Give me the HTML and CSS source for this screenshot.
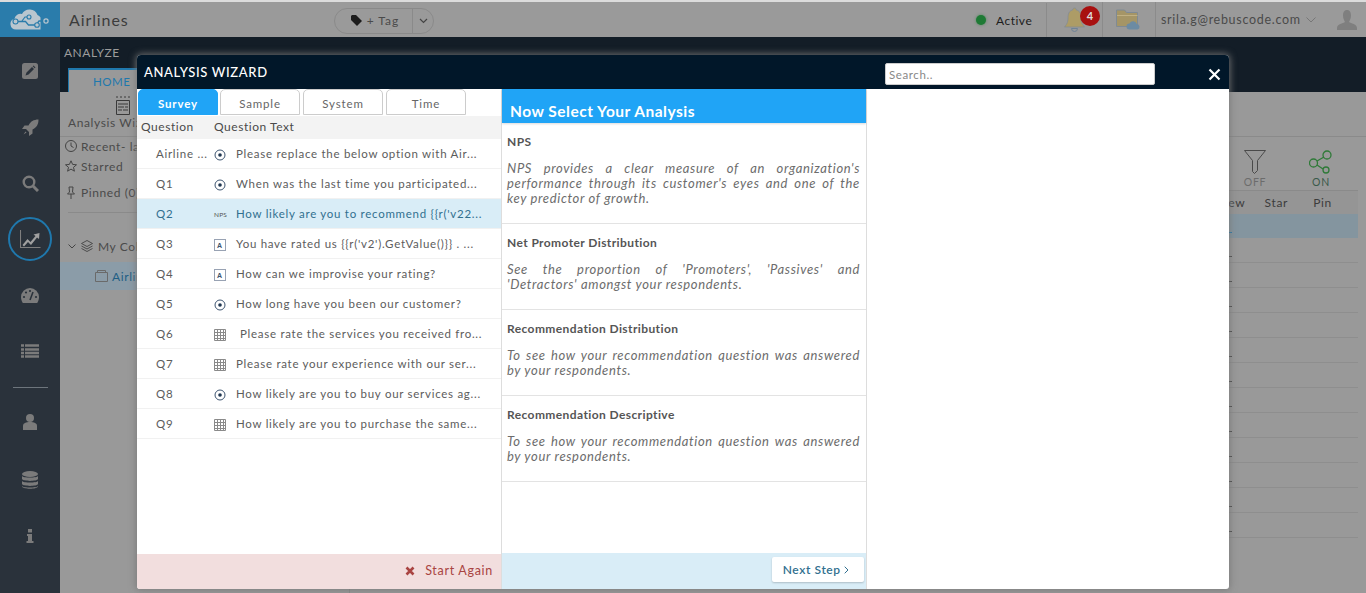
FILE: index.html
```html
<!DOCTYPE html>
<html lang="en">
<head>
<meta charset="utf-8">
<title>Airlines - Analysis Wizard</title>
<link rel="stylesheet" href="styles.css">
</head>
<body>
<svg class="defs" width="0" height="0" aria-hidden="true">
  <symbol id="radio" viewBox="0 0 12 12"><circle cx="6" cy="6" r="5" fill="none" stroke="#3d5470" stroke-width="1"/><circle cx="6" cy="6" r="1.8" fill="#1f3650"/></symbol>
  <symbol id="grid" viewBox="0 0 12 12"><path d="M.5.5h11v11H.5zM.5 3.5h11M.5 6.5h11M.5 9.5h11M3.5.5v11M6.5.5v11M9.5.5v11" fill="none" stroke="#8a8a8a" stroke-width="1"/></symbol>
  <symbol id="abox" viewBox="0 0 12 12"><rect x=".5" y=".5" width="11" height="11" fill="none" stroke="#98a2b3"/><text x="6" y="9" font-size="7" font-weight="700" text-anchor="middle" font-family="Liberation Sans" fill="#3d5470">A</text></symbol>
</svg>
<div class="app">
  <div class="strip"></div>
  <header class="topbar">
    <div class="logo">
      <svg width="39" height="21" viewBox="0 0 39 21"><path d="M6 20.500a5.500 5.500 0 0 1-1.500-10.800A6 6 0 0 1 12 5a8.500 8.500 0 0 1 15.500 1 6 6 0 0 1 3 2.500V20.500z" fill="#b9c6cf"/><path d="M6.500 12.500h9l3 3.500h7.500l3-4h7" fill="none" stroke="#2a7cab" stroke-width="1.300"/><path d="M12 12l3-4h3" fill="none" stroke="#2a7cab" stroke-width="1.200"/><circle cx="5.500" cy="12.500" r="2.500" fill="#b9c6cf" stroke="#2a7cab" stroke-width="1.100"/><circle cx="19" cy="8" r="2" fill="#b9c6cf" stroke="#2a7cab" stroke-width="1.100"/><circle cx="27" cy="16" r="2.300" fill="#b9c6cf" stroke="#2a7cab" stroke-width="1.100"/><circle cx="36" cy="12" r="2.100" fill="#2a7cab" stroke="#b9c6cf" stroke-width="1.200"/></svg>
    </div>
    <div class="app-title">Airlines</div>
    <div class="tag-group">
      <div class="tag-main">
        <svg width="11" height="11" viewBox="0 0 11 11"><path d="M0 1v4l6 6 5-5-6-6H1z" fill="#1c1c1c"/></svg>
        <span>+ Tag</span>
      </div>
      <div class="tag-caret"><svg width="9" height="6" viewBox="0 0 9 6"><path d="M1 1l3.500 3.500L8 1" fill="none" stroke="#444" stroke-width="1.200"/></svg></div>
    </div>
    <div class="top-right">
      <div class="status"><span class="dot"></span><span>Active</span></div>
      <div class="cell bell-cell">
        <svg width="21" height="25" viewBox="0 0 21 25"><path d="M10.500 1c1 0 1.800.8 1.800 2 4 1 4.700 4 4.700 8 0 5 2 7 3.500 9H.5c1.500-2 3.500-4 3.500-9 0-4 .7-7 4.700-8 0-1.200.8-2 1.800-2z" fill="#ad9c66" stroke="#7f8a96" stroke-width=".7"/><path d="M7.500 21.500a3 3 0 0 0 6 0z" fill="none" stroke="#6f8296"/></svg>
        <span class="badge">4</span>
      </div>
      <div class="cell folder-cell">
        <svg width="24" height="21" viewBox="0 0 24 21"><path d="M.5 17.500V1h8l2 2.500h11V17.500z" fill="#a59566" stroke="#7f8a94"/><path d="M1 6.500h20.500" stroke="#c0b083"/><path d="M13.500 20.500a3 3 0 0 1 0-6 4 4 0 0 1 7.300.5 2.800 2.800 0 0 1 .7 5.500z" fill="#6c8ba3"/></svg>
      </div>
      <div class="user">
        <span class="email">srila.g@rebuscode.com</span>
        <svg class="user-caret" width="10" height="6" viewBox="0 0 10 6"><path d="M.5.500L5 5 9.500.500" fill="none" stroke="#777"/></svg>
        <svg width="20" height="20" viewBox="0 0 20 20"><path d="M10 0c3 0 4 2.500 4 5.500S12.500 11 12 12c2 1.500 8 2 8 6v2H0v-2c0-4 6-4.500 8-6-.5-1-2-3.500-2-6.500S7 0 10 0z" fill="#7f7f7f"/></svg>
      </div>
    </div>
  </header>

  <div class="body">
    <nav class="side">
      <div class="side-item"><svg width="16" height="16" viewBox="0 0 16 16"><rect width="16" height="16" rx="2.500" fill="#7b7b7b"/><path d="M3.500 12.500l1-3 5.500-5.500 2 2-5.500 5.500zM10.700 3.300l.8-.8 2 2-.8.8z" fill="#2a323b"/></svg></div>
      <div class="side-item"><svg width="17" height="17" viewBox="0 0 17 17"><path d="M16.500.500c-5 0-8 2-10 6H2.500L0 10h4l3 3v4l3.500-2.500V10.500c4-2 6-5 6-10zM3.500 12.500l-2 3 3-2z" fill="#7b7b7b"/></svg></div>
      <div class="side-item"><svg width="17" height="17" viewBox="0 0 17 17"><circle cx="7" cy="7" r="5.300" fill="none" stroke="#7b7b7b" stroke-width="2.400"/><path d="M11 11l5 5" stroke="#7b7b7b" stroke-width="3"/></svg></div>
      <div class="side-item"><div class="ring"><svg width="21" height="18" viewBox="0 0 21 18"><path d="M.5 0v17.500h20" fill="none" stroke="#7f7f7f" stroke-width="1.100"/><path d="M2.500 15l5-6 3 3 5-6-2-1.500 6-1.500-.5 6-2-1.500-6 7.500-3-3-4 4.500z" fill="#a0a0a0"/></svg></div></div>
      <div class="side-item"><svg width="18" height="15" viewBox="0 0 18 15"><path d="M9 0a9 9 0 0 1 9 9c0 2-.6 4-1.800 6H1.800C.6 13 0 11 0 9a9 9 0 0 1 9-9z" fill="#7b7b7b"/><path d="M9 12l3-8" stroke="#2a323b" stroke-width="1.600"/><circle cx="3" cy="9" r="1.100" fill="#2a323b"/><circle cx="5" cy="4.500" r="1.100" fill="#2a323b"/><circle cx="9" cy="3" r="1.100" fill="#2a323b"/><circle cx="15" cy="9" r="1.100" fill="#2a323b"/></svg></div>
      <div class="side-item"><svg width="18" height="14" viewBox="0 0 18 14"><path d="M0 1.500h3M4 1.500h14M0 5.500h3M4 5.500h14M0 9h3M4 9h14M0 12.500h3M4 12.500h14" stroke="#7b7b7b" stroke-width="2.400"/></svg></div>
      <div class="side-rule"></div>
      <div class="side-item"><svg width="14" height="16" viewBox="0 0 14 16"><circle cx="7" cy="4" r="4" fill="#7b7b7b"/><path d="M0 16v-4c0-3 3-4 7-4s7 1 7 4v4z" fill="#7b7b7b"/></svg></div>
      <div class="side-item db-item"><svg width="16" height="18" viewBox="0 0 16 18"><ellipse cx="8" cy="3" rx="8" ry="3" fill="#7b7b7b"/><path d="M0 5c1 2 15 2 16 0v3c-1 2.500-15 2.500-16 0zM0 10c1 2 15 2 16 0v3c-1 2.500-15 2.500-16 0zM0 15c1 2 15 2 16 0v.500c-1 3-15 3-16 0z" fill="#7b7b7b"/></svg></div>
      <div class="side-item"><svg width="8" height="14" viewBox="0 0 8 14"><rect x="2" width="4" height="3.500" fill="#7b7b7b"/><path d="M1 5h5v7h1.500v2H.5v-2H2V7H1z" fill="#7b7b7b"/></svg></div>
    </nav>

    <main class="main">
      <div class="band">
        <div class="band-title">ANALYZE</div>
        <div class="home-tab">HOME</div>
      </div>
      <div class="content">
        <aside class="pane">
          <div class="wizard-btn">
            <svg width="16" height="20" viewBox="0 0 16 20"><path d="M1.500 5.500h13v14h-13z" fill="none" stroke="#3a3a3a"/><path d="M3 9h10M3 12h6M10 12h3M3 15h4M8 15h5" stroke="#3a3a3a" stroke-width="1.200"/><path d="M1 2h14" stroke="#3a3a3a" stroke-dasharray="2 2"/></svg>
            <span>Analysis Wizard</span>
          </div>
          <div class="nav-line"><svg width="12" height="12" viewBox="0 0 12 12"><circle cx="6" cy="6" r="5.500" fill="none" stroke="#444"/><path d="M6 2.500V6l2.500 1.500" fill="none" stroke="#444"/></svg><span>Recent- last 7</span></div>
          <div class="nav-line"><svg width="12" height="12" viewBox="0 0 12 12"><path d="M6 .8l1.600 3.600 3.900.4-3 2.500.9 3.900L6 9.100l-3.400 2.100.9-3.900-3-2.500 3.900-.4z" fill="none" stroke="#444"/></svg><span>Starred</span></div>
          <div class="nav-line pin"><svg width="12" height="13" viewBox="0 0 12 13"><path d="M4 1h4l-.5 5 2 2h-7l2-2zM6 8v5" fill="none" stroke="#444"/></svg><span>Pinned (0)</span></div>
          <div class="pane-rule"></div>
          <div class="tree-line"><svg width="8" height="5" viewBox="0 0 8 5"><path d="M.5.500L4 4 7.500.500" fill="none" stroke="#444"/></svg><svg width="12" height="12" viewBox="0 0 12 12"><path d="M6 .5L11.500 3.500 6 6.500.5 3.500zM.5 6L6 9l5.500-3M.5 8.500L6 11.500l5.500-3" fill="none" stroke="#444" stroke-width=".9"/></svg><span>My Collection</span></div>
          <div class="tree-sel"><svg width="13" height="12" viewBox="0 0 13 12"><path d="M.5 2.500h12v9H.5zM2.500 2.500V.5h8v2" fill="none" stroke="#6a6a6a"/></svg><span>Airlines</span></div>
        </aside>
        <section class="board">
          <div class="board-top"></div>
          <div class="tools">
            <div class="tool"><svg width="22" height="24" viewBox="0 0 22 24"><path d="M.5.500h21l-8 10v10l-3 3-2-2V10.500z" fill="none" stroke="#4a4a4a"/></svg><span>OFF</span></div>
            <div class="tool on"><svg width="24" height="24" viewBox="0 0 24 24"><circle cx="18" cy="5" r="4" fill="none" stroke="#2f7a38" stroke-width="1.300"/><circle cx="4.500" cy="13" r="4" fill="none" stroke="#2f7a38" stroke-width="1.300"/><circle cx="17" cy="20" r="3" fill="none" stroke="#2f7a38" stroke-width="1.300"/><path d="M8 11l7-4M8 15l6 4" stroke="#2f7a38" stroke-width="1.300"/></svg><span>ON</span></div>
          </div>
          <div class="thead"><span class="col-view">View</span><span class="col-star">Star</span><span class="col-pin">Pin</span></div>
          <div class="tsel"></div>
          <div class="trow"></div><div class="trow"></div><div class="trow"></div><div class="trow"></div>
          <div class="trow"></div><div class="trow"></div><div class="trow"></div><div class="trow"></div>
          <div class="trow"></div><div class="trow"></div><div class="trow"></div><div class="trow"></div>
        </section>
      </div>
    </main>
  </div>

  <div class="wizard">
    <div class="wizard-head">
      <h1>ANALYSIS WIZARD</h1>
      <input class="search" type="text" placeholder="Search..">
      <svg class="close" width="13" height="13" viewBox="0 0 13 13"><path d="M1.500 1.500l10 10M11.500 1.500l-10 10" stroke="#fff" stroke-width="2.200"/></svg>
    </div>
    <div class="wizard-body">
      <section class="col-left">
        <div class="tabs">
          <div class="tab active">Survey</div>
          <div class="tab">Sample</div>
          <div class="tab tab-system">System</div>
          <div class="tab">Time</div>
        </div>
        <div class="q-head"><span class="q-c1">Question</span><span>Question Text</span></div>
        <div class="q-list">
          <div class="q-row"><span class="q-id">Airline ...</span><svg class="q-ico"><use href="#radio"/></svg><span class="q-text">Please replace the below option with Air...</span></div>
          <div class="q-row"><span class="q-id">Q1</span><svg class="q-ico"><use href="#radio"/></svg><span class="q-text">When was the last time you participated...</span></div>
          <div class="q-row sel"><span class="q-id">Q2</span><span class="q-nps">NPS</span><span class="q-text">How likely are you to recommend {{r('v22...</span></div>
          <div class="q-row"><span class="q-id">Q3</span><svg class="q-ico"><use href="#abox"/></svg><span class="q-text">You have rated us {{r('v2').GetValue()}} . ...</span></div>
          <div class="q-row"><span class="q-id">Q4</span><svg class="q-ico"><use href="#abox"/></svg><span class="q-text">How can we improvise your rating?</span></div>
          <div class="q-row"><span class="q-id">Q5</span><svg class="q-ico"><use href="#radio"/></svg><span class="q-text">How long have you been our customer?</span></div>
          <div class="q-row"><span class="q-id">Q6</span><svg class="q-ico"><use href="#grid"/></svg><span class="q-text indent">Please rate the services you received fro...</span></div>
          <div class="q-row"><span class="q-id">Q7</span><svg class="q-ico"><use href="#grid"/></svg><span class="q-text">Please rate your experience with our ser...</span></div>
          <div class="q-row"><span class="q-id">Q8</span><svg class="q-ico"><use href="#radio"/></svg><span class="q-text">How likely are you to buy our services ag...</span></div>
          <div class="q-row"><span class="q-id">Q9</span><svg class="q-ico"><use href="#grid"/></svg><span class="q-text">How likely are you to purchase the same...</span></div>
        </div>
        <div class="foot-left">
          <svg width="10" height="10" viewBox="0 0 10 10"><path d="M1.500 1.500l7 7M8.500 1.500l-7 7" stroke="#a94442" stroke-width="2.600"/></svg>
          <span>Start Again</span>
        </div>
      </section>
      <section class="col-mid">
        <h2 class="mid-title">Now Select Your Analysis</h2>
        <div class="a-list">
          <article class="a-item"><h3>NPS</h3><p>NPS provides a clear measure of an organization's performance through its customer's eyes and one of the key predictor of growth.</p></article>
          <article class="a-item"><h3>Net Promoter Distribution</h3><p>See the proportion of 'Promoters', 'Passives' and 'Detractors' amongst your respondents.</p></article>
          <article class="a-item"><h3>Recommendation Distribution</h3><p>To see how your recommendation question was answered by your respondents.</p></article>
          <article class="a-item"><h3>Recommendation Descriptive</h3><p>To see how your recommendation question was answered by your respondents.</p></article>
        </div>
        <div class="foot-mid"><button class="next" type="button">Next Step <svg width="5" height="8" viewBox="0 0 5 8"><path d="M.7.700L4 4 .7 7.300" fill="none" stroke="#31708f" stroke-width="1"/></svg></button></div>
      </section>
      <section class="col-right"></section>
    </div>
  </div>
</div>
</body>
</html>
```

FILE: styles.css
```css
* { box-sizing: border-box; }
html, body { margin: 0; padding: 0; height: 100%; overflow: hidden; }
body { font-family: "Lato", "Noto Sans", sans-serif; color: #444; font-size: 12px; }
.defs { position: absolute; }
h1, h2, h3, p { margin: 0; }

.app { position: relative; width: 1366px; height: 593px; background: #999; overflow: hidden; display: flex; flex-direction: column; }
.strip { height: 2px; background: #dcdcdc; flex: none; }

.topbar { height: 35px; flex: none; display: flex; align-items: stretch; background: #9a9a9a; }
.logo { width: 60px; background: #2a7cab; display: flex; align-items: center; justify-content: center; padding-right: 1px; }
.app-title { margin-left: 9px; font-size: 16px; letter-spacing: .9px; line-height: 35px; color: #3c3c3c; width: 265px; }
.tag-group { align-self: center; display: flex; width: 100px; height: 26px; border: 1px solid #8a8a8a; border-radius: 13px; margin-top: 2px; }
.tag-main { flex: 1; display: flex; align-items: center; justify-content: center; gap: 5px; font-size: 12px; letter-spacing: 1px; color: #4a4a4a; border-right: 1px solid #8a8a8a; padding-left: 3px; }
.tag-caret { width: 20px; display: flex; align-items: center; justify-content: center; }
.top-right { margin-left: auto; display: flex; align-items: stretch; }
.status { display: flex; align-items: center; font-size: 12px; letter-spacing: .5px; color: #1c1c1c; width: 71px; border-right: 1px solid #8b8b8b; margin-top: 1px; }
.dot { width: 10px; height: 10px; border-radius: 50%; background: #1e7a35; margin-right: 10px; box-shadow: 0 0 3px rgba(30,122,53,.6); }
.cell { position: relative; display: flex; align-items: center; border-right: 1px solid #8b8b8b; }
.bell-cell { width: 56px; padding-left: 17px; }
.badge { position: absolute; left: 33px; top: 4px; width: 20px; height: 20px; border-radius: 50%; background: #a81010; color: #ddd; font-size: 11px; font-weight: 700; text-align: center; line-height: 20px; }
.folder-cell { width: 53px; padding-left: 13px; }
.user { width: 210px; display: flex; align-items: center; padding-left: 5px; }
.email { font-size: 12.500px; letter-spacing: .7px; color: #4a4a4a; width: 144px; white-space: nowrap; }
.user-caret { margin: 0 21px 0 1px; }

.body { flex: 1; display: flex; min-height: 0; }
.side { width: 60px; flex: none; background: #2a323b; padding-top: 6px; display: flex; flex-direction: column; align-items: center; }
.side-item { height: 56px; width: 100%; display: flex; align-items: center; justify-content: center; flex: none; }
.ring { width: 44px; height: 44px; border-radius: 50%; border: 2px solid #1f78ad; display: flex; align-items: center; justify-content: center; }
.side-rule { width: 35px; height: 1px; background: #6d757c; margin: 8px 0 6px; flex: none; }
.db-item { margin-top: 2px; }

.main { flex: 1; display: flex; flex-direction: column; min-width: 0; }
.band { height: 55px; flex: none; background: #131d27; padding: 8px 0 0 4px; position: relative; display: flex; flex-direction: column; }
.band-title { font-size: 12px; letter-spacing: .5px; color: #9c9c9c; line-height: 16px; }
.home-tab { margin: 7px 0 0 4px; width: 80px; height: 24px; background: #999; border-top: 2px solid #1f78ad; border-left: 1px solid #1f78ad; color: #1f78ad; font-size: 11.500px; letter-spacing: .5px; padding: 5px 0 0 24px; }
.content { flex: 1; display: flex; min-height: 0; }
.pane { width: 290px; flex: none; border-right: 1px solid #8a8a8a; color: #4a4a4a; letter-spacing: .6px; }
.wizard-btn { height: 45px; border-bottom: 1px solid #8a8a8a; display: flex; flex-direction: column; align-items: flex-start; width: 100%; white-space: nowrap; padding: 3px 0 0 8px; }
.wizard-btn svg { margin-left: 47px; }
.nav-line { display: flex; align-items: center; gap: 4px; padding-left: 5px; height: 20px; white-space: nowrap; margin-top: -1px; }
.nav-line + .nav-line { margin-top: 0; }
.nav-line.pin { margin-top: 6px; }
.pane-rule { height: 1px; margin: 10px 8px 0; background: #8a8a8a; }
.tree-line { display: flex; align-items: center; gap: 5px; padding-left: 8px; height: 20px; margin-top: 23px; white-space: nowrap; }
.tree-sel { display: flex; align-items: center; gap: 4px; height: 28px; margin-top: 6px; padding-left: 35px; background: #8b9ca8; color: #1f5f85; }

.board { flex: 1; display: flex; flex-direction: column; min-width: 0; padding-right: 8px; }
.board-top { height: 45px; flex: none; border-bottom: 1px solid #8a8a8a; margin-right: -8px; }
.tools { height: 53px; flex: none; display: flex; justify-content: flex-end; align-items: flex-start; padding: 13px 25px 0 0; gap: 42px; }
.tool { width: 24px; display: flex; flex-direction: column; align-items: center; font-size: 10.500px; letter-spacing: .7px; color: #6c6c6c; line-height: 12px; gap: 2px; }
.tool.on { color: #3a5a4a; }
.thead { height: 24px; flex: none; background: #959595; border-top: 1px solid #8a8a8a; display: flex; align-items: center; justify-content: flex-end; font-size: 12px; letter-spacing: .7px; color: #3c3c3c; }
.col-view { margin-right: 19px; }
.col-star { margin-right: 25px; }
.col-pin { margin-right: 26px; }
.tsel { height: 24px; flex: none; background: #84959f; }
.tsel::before, .trow::before { content: ""; display: block; width: 14px; height: 18px; margin-left: auto; margin-right: 126px; border-bottom: 1px solid #444; }
.tsel::before { border-bottom-color: #1f78ad; }
.trow { height: 25px; flex: none; border-bottom: 1px solid #8e8e8e; }

.wizard { position: absolute; left: 137px; top: 55px; width: 1092px; height: 534px; background: #fff; border-radius: 4px 4px 3px 3px; box-shadow: 0 0 7px 1px rgba(120,120,120,.9); display: flex; flex-direction: column; overflow: hidden; }
.wizard-head { height: 34px; flex: none; background: #011729; display: flex; align-items: center; padding-right: 8px; }
.wizard-head h1 { font-size: 13px; font-weight: 500; letter-spacing: .65px; color: #fff; padding-left: 7px; flex: 1; white-space: nowrap; }
.search { width: 270px; height: 22px; border: 1px solid #ccc; border-radius: 2px; background: #fff; font: 11.500px "Lato", sans-serif; letter-spacing: .6px; padding: 0 3px; margin-right: 53px; margin-top: 4px; }
.search::placeholder { color: #888; opacity: 1; }
.close { margin-top: 5px; }
.wizard-body { flex: 1; display: flex; min-height: 0; }

.col-left { width: 364px; flex: none; display: flex; flex-direction: column; }
.tabs { height: 27px; flex: none; display: flex; padding: 0 0 0 1px; gap: 2px; }
.tab { width: 80px; height: 26px; border: 1px solid #ccc; border-radius: 5px 5px 0 0; text-align: center; line-height: 27px; font-size: 11.500px; letter-spacing: .85px; color: #666; }
.tab-system { margin-left: 1px; margin-right: 1px; }
.tab.active { background: #20a4f6; border-color: #20a4f6; color: #fff; font-weight: 700; }
.q-head { height: 23px; flex: none; background: #f3f3f3; display: flex; align-items: center; padding: 0 0 2px 4px; font-size: 12px; letter-spacing: .55px; color: #4a4a4a; }
.q-c1 { width: 73px; }
.q-list { flex: 1; }
.q-row { height: 30px; display: flex; align-items: center; border-bottom: 1px solid #f1f1f1; color: #5c5c5c; font-size: 11.500px; letter-spacing: .72px; padding-left: 19px; white-space: nowrap; }
.q-id { width: 58px; flex: none; }
.q-ico { width: 12px; height: 12px; margin-top: 2px; flex: none; margin-right: 10px; }
.q-nps { width: 22px; flex: none; font-size: 6.500px; letter-spacing: .2px; color: #555; margin-top: 2px; }
.q-text.indent { margin-left: 4px; }
.q-row.sel { background: #d9edf7; color: #31708f; }
.foot-left { height: 35px; flex: none; background: #f2dede; color: #a94442; display: flex; align-items: center; justify-content: flex-end; gap: 10px; padding: 0 8px 2px 0; font-size: 12.500px; letter-spacing: .7px; }

.col-mid { width: 366px; flex: none; border-left: 1px solid #ddd; border-right: 1px solid #ddd; display: flex; flex-direction: column; }
.mid-title { height: 34px; flex: none; background: #20a4f6; color: #fff; font-size: 15.500px; font-weight: 700; letter-spacing: .5px; padding: 13px 0 0 8px; line-height: 18px; box-shadow: 0 1px 2px rgba(0,0,0,.15); }
.a-list { flex: 1; }
.a-item { padding: 11px 6px 17px 5px; border-bottom: 1px solid #e3e3e3; }
.a-item h3 { font-size: 12px; font-weight: 700; letter-spacing: .4px; line-height: 16px; color: #555; margin-bottom: 11px; }
.a-item p { font-size: 13px; font-style: italic; line-height: 15px; letter-spacing: .65px; text-align: justify; color: #6c6c6c; }
.foot-mid { height: 36px; flex: none; background: #d9edf7; display: flex; justify-content: flex-end; align-items: flex-start; padding: 4px 2px 0 0; }
.next { width: 92px; height: 25px; background: #fff; border: 0; border-radius: 2px; box-shadow: 0 1px 2px rgba(0,0,0,.2); font: 600 12px "Lato", sans-serif; letter-spacing: .6px; color: #31708f; padding: 0 4px 0 0; }
.col-right { flex: 1; }
```
